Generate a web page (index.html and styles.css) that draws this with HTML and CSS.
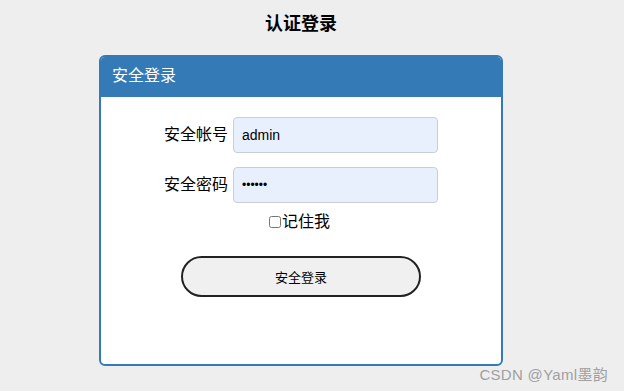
FILE: index.html
```html
<!DOCTYPE html>
<html lang="zh-CN">
<head>
  <meta charset="UTF-8" />
  <title>认证登录</title>
  <link rel="stylesheet" href="styles.css">
</head>
<body>
  <div class="wrap">
    <h2 class="page-title">认证登录</h2>

    <div class="panel">
      <div class="panel-heading">安全登录</div>
      <form class="panel-body">
        <div class="row">
          <label class="label" for="user">安全帐号</label>
          <input class="field" id="user" type="text" value="admin">
        </div>
        <div class="row">
          <label class="label" for="pwd">安全密码</label>
          <input class="field pwd" id="pwd" type="password" value="123456">
        </div>
        <div class="remember">
          <input type="checkbox" id="remember"><label for="remember">记住我</label>
        </div>
        <div class="actions">
          <button class="btn" type="button">安全登录</button>
        </div>
      </form>
    </div>
  </div>

  <div class="watermark">CSDN @Yaml墨韵</div>
</body>
</html>
```

FILE: styles.css
```css
* { box-sizing: border-box; }
body {
  margin: 0;
  background: #eeeeee;
  color: #000;
  font-family: "Liberation Sans", "Noto Sans CJK SC", sans-serif;
  height: 391px;
  position: relative;
  overflow: hidden;
}
.wrap {
  width: 404px;
  margin-left: 99px;
  padding-top: 12px;
}
.page-title {
  margin: 0 0 19px;
  text-align: center;
  font-size: 18px;
  line-height: 24px;
  font-weight: bold;
}
.panel {
  height: 311px;
  border: 2px solid #337ab7;
  border-radius: 6px;
  background: #fff;
  overflow: hidden;
}
.panel-heading {
  height: 42px;
  margin-top: -2px;
  padding-left: 11px;
  background: #337ab7;
  color: #fff;
  font-size: 16px;
  line-height: 42px;
}
.panel-body {
  display: flex;
  flex-direction: column;
  align-items: center;
  padding-top: 20px;
}
.row {
  display: flex;
  align-items: center;
  gap: 5px;
  margin-bottom: 14px;
}
.row:nth-child(2) { margin-bottom: 7px; }
.label {
  font-size: 16px;
  line-height: 20px;
}
.field {
  width: 205px;
  height: 36px;
  border: 1px solid #c9ced6;
  border-radius: 4px;
  background: #e8f0fe;
  padding: 0 8px;
  font-family: "Liberation Sans", sans-serif;
  font-size: 14px;
  color: #000;
}
.field.pwd {
  font-size: 12px;
}
.remember {
  display: flex;
  align-items: center;
  font-size: 16px;
  line-height: 24px;
  margin-left: -3px;
}
.remember input {
  margin: 0 1px 0 0;
  width: 12px;
  height: 12px;
}
.actions {
  margin-top: 22px;
}
.btn {
  width: 240px;
  height: 41px;
  border: 2px solid #222;
  border-radius: 21px;
  background: #f0f0f0;
  font-family: "Liberation Sans", "Noto Sans CJK SC", sans-serif;
  font-size: 13px;
  color: #000;
}
.watermark {
  position: absolute;
  right: 16px;
  bottom: 7px;
  color: #a0a0a0;
  font-size: 15px;
  letter-spacing: 0.3px;
}
```
